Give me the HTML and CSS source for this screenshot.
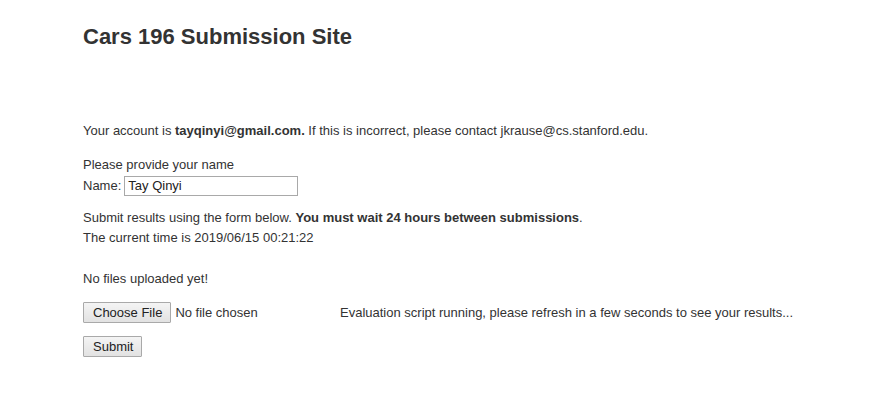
FILE: index.html
```html
<!DOCTYPE html>
<html>
<head>
<meta charset="utf-8">
<title>Cars 196 Submission Site</title>
<link rel="stylesheet" href="styles.css">
</head>
<body>
<div class="container">
  <h3 class="title">Cars 196 Submission Site</h3>
  <p class="account">Your account is <b>tayqinyi@gmail.com.</b> If this is incorrect, please contact jkrause@cs.stanford.edu.</p>
  <div class="name-block">
    <div class="line">Please provide your name</div>
    <div class="line name-row">Name: <span class="name-input">Tay Qinyi</span></div>
  </div>
  <div class="submit-info">
    <div class="line">Submit results using the form below. <b>You must wait 24 hours between submissions</b>.</div>
    <div class="line">The current time is 2019/06/15 00:21:22</div>
  </div>
  <div class="line nofiles">No files uploaded yet!</div>
  <div class="file-row">
    <div class="file-input"><span class="btn">Choose File</span><span class="nofile">No file chosen</span></div>
    <div class="eval">Evaluation script running, please refresh in a few seconds to see your results...</div>
  </div>
  <div class="submit-row"><span class="btn">Submit</span></div>
</div>
</body>
</html>
```
FILE: styles.css
```css
html, body {
  margin: 0;
  padding: 0;
  background: #fff;
}
body {
  font-family: "Liberation Sans", Arial, sans-serif;
  font-size: 13px;
  line-height: 20px;
  color: #333;
}
.container {
  padding: 0 0 0 83px;
}
.title {
  margin: 0;
  padding-top: 24px;
  font-size: 22px;
  line-height: 26px;
  font-weight: bold;
  color: #333;
}
b { font-weight: bold; }
.account {
  margin: 71px 0 0;
}
.name-block {
  margin-top: 14px;
}
.name-row {
  display: flex;
  align-items: center;
  height: 21px;
}
.name-input {
  margin-left: 3px;
  box-sizing: border-box;
  width: 174px;
  height: 20px;
  border: 1px solid #a9a9a9;
  padding: 0 3px;
  line-height: 18px;
  color: #222;
}
.submit-info {
  margin-top: 12px;
}
.nofiles {
  margin-top: 21px;
}
.file-row {
  display: flex;
  align-items: center;
  margin-top: 13px;
  height: 21px;
}
.file-input {
  width: 257px;
  display: flex;
  align-items: center;
}
.btn {
  display: inline-block;
  box-sizing: border-box;
  height: 21px;
  line-height: 19px;
  padding: 0 8px 0 9px;
  border: 1px solid #a9a9a9;
  border-radius: 1px;
  background: linear-gradient(#f4f4f4, #e2e2e2);
  color: #222;
}
.nofile {
  margin-left: 4px;
}
.submit-row {
  margin-top: 13px;
}
```
